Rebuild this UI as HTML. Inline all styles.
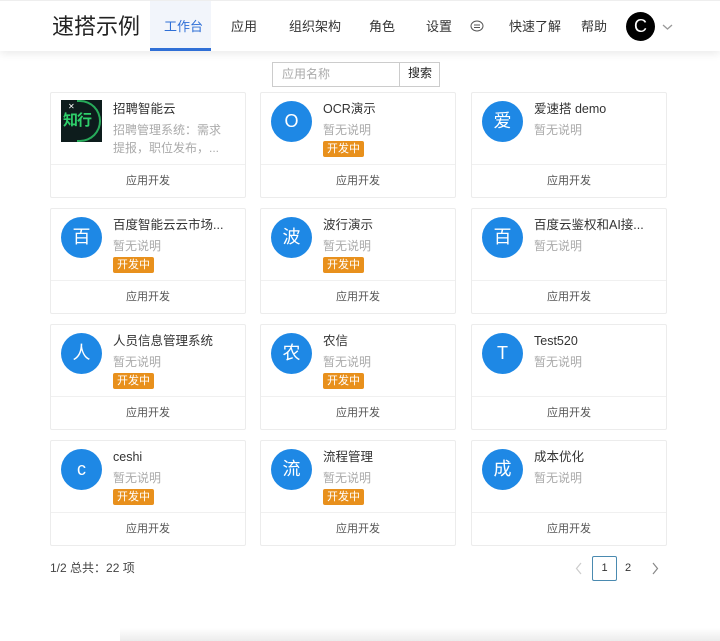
<!DOCTYPE html>
<html><head><meta charset="utf-8"><style>
*{box-sizing:border-box;margin:0;padding:0}
body{width:720px;height:641px;overflow:hidden;background:#fff;font-family:"Liberation Sans","Noto Sans CJK SC",sans-serif;color:#333;position:relative}
.hdr{position:absolute;left:0;top:0;width:720px;height:51px;background:#fff;box-shadow:0 3px 8px rgba(0,0,0,.08);border-top:1px solid #eee}
.a{position:absolute;white-space:nowrap}
.nav{font-size:13px;color:#333;top:18px;line-height:16px}
.card{position:absolute;width:196px;height:106px;border:1px solid #ececec;border-radius:2px;background:#fff}
.card .av{position:absolute;left:10px;top:8px;width:41px;height:41px;border-radius:50%;background:#1e88e5;color:#fff;font-size:18px;text-align:center;line-height:41px}
.card .t{position:absolute;left:62px;top:8px;font-size:12.5px;line-height:16px;color:#333;white-space:nowrap}
.card .d{position:absolute;left:62px;top:29px;font-size:12px;line-height:16px;color:#aaa;white-space:nowrap}
.card .b{position:absolute;left:62px;top:48px;height:16px;padding:0 4px;background:#e8901c;color:#fff;font-size:11px;line-height:16px;border-radius:2px}
.card .f{position:absolute;left:0;right:0;top:71px;border-top:1px solid #f0f0f0;text-align:center;font-size:11px;line-height:14px;color:#555;padding-top:9px}
</style></head><body>
<div class="hdr">
<div class="a" style="left:52px;top:12px;font-size:22px;line-height:28px;color:#222">速搭示例</div>
<div class="a" style="left:150px;top:0;width:61px;height:50px;background:#f2f5fb;border-bottom:3px solid #2f6fd6"></div>
<div class="a nav" style="left:164px;color:#2f6fd6">工作台</div>
<div class="a nav" style="left:231px">应用</div>
<div class="a nav" style="left:289px">组织架构</div>
<div class="a nav" style="left:369px">角色</div>
<div class="a nav" style="left:426px">设置</div>
<svg class="a" style="left:470px;top:19px" width="14" height="13" viewBox="0 0 14 13"><ellipse cx="7" cy="6" rx="6" ry="5" fill="none" stroke="#555" stroke-width="1"/><path d="M4 5h6M4 7.5h6" stroke="#555" stroke-width="1"/></svg>
<div class="a nav" style="left:509px">快速了解</div>
<div class="a nav" style="left:581px">帮助</div>
<div class="a" style="left:626px;top:11px;width:29px;height:29px;border-radius:50%;background:#000;color:#fff;font-size:18px;text-align:center;line-height:29px">C</div>
<svg class="a" style="left:662px;top:22px" width="11" height="8" viewBox="0 0 11 8"><path d="M1 2l4.5 4L10 2" fill="none" stroke="#999" stroke-width="1.3"/></svg>
</div>
<div class="a" style="left:272px;top:62px;width:168px;height:25px;border:1px solid #ccc"></div>
<div class="a" style="left:282px;top:66px;font-size:12px;line-height:16px;color:#aaa">应用名称</div>
<div class="a" style="left:399px;top:62px;width:41px;height:25px;border-left:1px solid #ccc;font-size:12px;text-align:center;line-height:23px;color:#222">搜索</div>

<div class="card" style="left:50px;top:92px"><div class="a" style="left:10px;top:7px;width:41px;height:42px;background:#0d1c1c;overflow:hidden"><div class="a" style="left:2px;top:12px;font-size:15px;line-height:18px;font-weight:bold;color:#2ecf6a;letter-spacing:-1px">知行</div><div class="a" style="left:16px;top:0;width:24px;height:42px;border:2px solid #2ecf6a;border-left:none;border-radius:0 21px 21px 0;opacity:.8"></div><div class="a" style="left:7px;top:3px;color:#fff;font-size:8px;line-height:8px">✕</div></div><div class="t">招聘智能云</div><div class="d">招聘管理系统：需求</div><div class="d" style="top:47px">提报，职位发布，...</div><div class="f">应用开发</div></div>
<div class="card" style="left:260px;top:92px"><div class="av">O</div><div class="t">OCR演示</div><div class="d">暂无说明</div><div class="b">开发中</div><div class="f">应用开发</div></div>
<div class="card" style="left:471px;top:92px"><div class="av">爱</div><div class="t">爱速搭 demo</div><div class="d">暂无说明</div><div class="f">应用开发</div></div>

<div class="card" style="left:50px;top:208px"><div class="av">百</div><div class="t">百度智能云云市场...</div><div class="d">暂无说明</div><div class="b">开发中</div><div class="f">应用开发</div></div>
<div class="card" style="left:260px;top:208px"><div class="av">波</div><div class="t">波行演示</div><div class="d">暂无说明</div><div class="b">开发中</div><div class="f">应用开发</div></div>
<div class="card" style="left:471px;top:208px"><div class="av">百</div><div class="t">百度云鉴权和AI接...</div><div class="d">暂无说明</div><div class="f">应用开发</div></div>

<div class="card" style="left:50px;top:324px"><div class="av">人</div><div class="t">人员信息管理系统</div><div class="d">暂无说明</div><div class="b">开发中</div><div class="f">应用开发</div></div>
<div class="card" style="left:260px;top:324px"><div class="av">农</div><div class="t">农信</div><div class="d">暂无说明</div><div class="b">开发中</div><div class="f">应用开发</div></div>
<div class="card" style="left:471px;top:324px"><div class="av">T</div><div class="t">Test520</div><div class="d">暂无说明</div><div class="f">应用开发</div></div>

<div class="card" style="left:50px;top:440px"><div class="av">c</div><div class="t">ceshi</div><div class="d">暂无说明</div><div class="b">开发中</div><div class="f">应用开发</div></div>
<div class="card" style="left:260px;top:440px"><div class="av">流</div><div class="t">流程管理</div><div class="d">暂无说明</div><div class="b">开发中</div><div class="f">应用开发</div></div>
<div class="card" style="left:471px;top:440px"><div class="av">成</div><div class="t">成本优化</div><div class="d">暂无说明</div><div class="f">应用开发</div></div>

<div class="a" style="left:50px;top:560px;font-size:12px;line-height:16px;color:#444">1/2 总共：22 项</div>
<svg class="a" style="left:575px;top:562px" width="8" height="13" viewBox="0 0 8 13"><path d="M6 1L1.5 6.5 6 12" fill="none" stroke="#ccc" stroke-width="1.2"/></svg>
<div class="a" style="left:592px;top:556px;width:25px;height:25px;border:1px solid #4a8ab0;border-radius:2px;font-size:11px;text-align:center;line-height:23px;color:#333">1</div>
<div class="a" style="left:625px;top:561px;font-size:11px;line-height:14px;color:#333">2</div>
<svg class="a" style="left:651px;top:562px" width="8" height="13" viewBox="0 0 8 13"><path d="M2 1l4.5 5.5L2 12" fill="none" stroke="#888" stroke-width="1.2"/></svg>
<div class="a" style="left:120px;top:628px;width:600px;height:13px;background:linear-gradient(#fff,#ececec)"></div>
</body></html>
